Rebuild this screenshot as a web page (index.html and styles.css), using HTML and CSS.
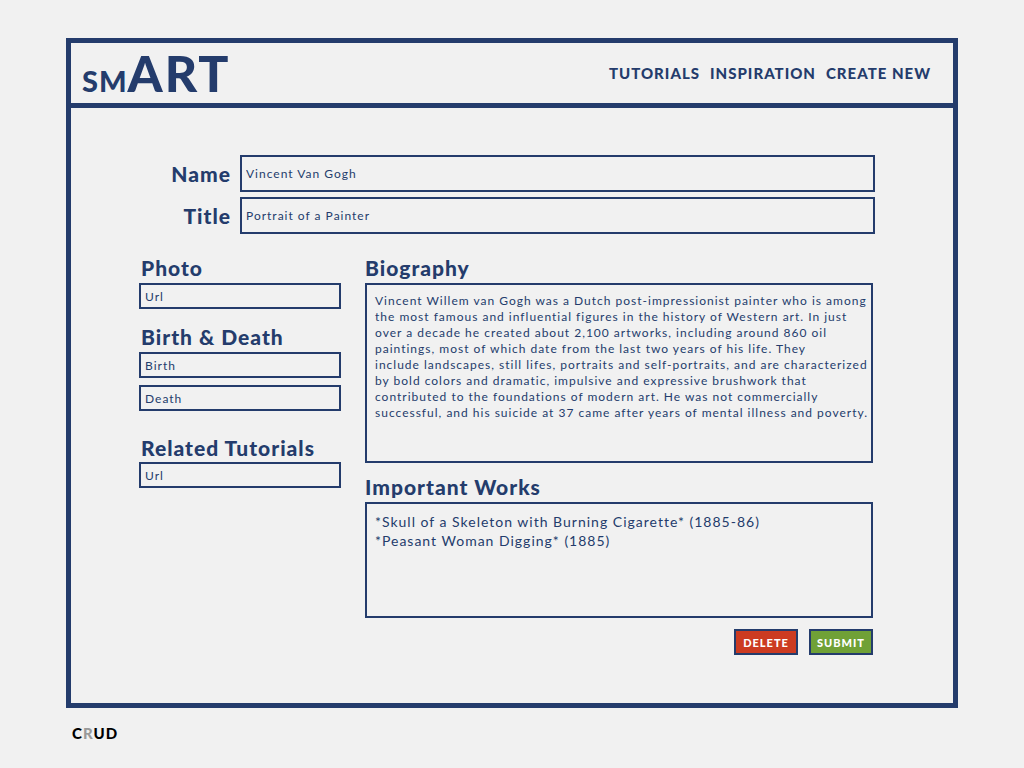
FILE: index.html
```html
<!DOCTYPE html>
<html lang="en">
<head>
<meta charset="utf-8">
<title>smART</title>
<link rel="stylesheet" href="styles.css">
</head>
<body>
<div class="frame">
  <header class="topbar">
    <a class="logo" href="#"><span class="logo-small">SM</span>ART</a>
    <nav class="nav">
      <a href="#">TUTORIALS</a>
      <a href="#">INSPIRATION</a>
      <a href="#">CREATE NEW</a>
    </nav>
  </header>
  <main class="main">
    <form class="form">
      <div class="row">
        <label class="label" for="name">Name</label>
        <input class="field field-large" id="name" type="text" value="Vincent Van Gogh">
      </div>
      <div class="row">
        <label class="label" for="title">Title</label>
        <input class="field field-large" id="title" type="text" value="Portrait of a Painter">
      </div>
      <div class="columns">
        <div class="side">
          <div class="group">
            <label class="label" for="photo">Photo</label>
            <input class="field" id="photo" type="text" value="Url">
          </div>
          <div class="group group-dates">
            <label class="label" for="birth">Birth &amp; Death</label>
            <input class="field" id="birth" type="text" value="Birth">
            <input class="field" id="death" type="text" value="Death" aria-label="Death">
          </div>
          <div class="group group-related">
            <label class="label" for="related">Related Tutorials</label>
            <input class="field" id="related" type="text" value="Url">
          </div>
        </div>
        <div class="content">
          <label class="label" for="bio">Biography</label>
          <textarea class="field area area-bio" id="bio">Vincent Willem van Gogh was a Dutch post-impressionist painter who is among
the most famous and influential figures in the history of Western art. In just
over a decade he created about 2,100 artworks, including around 860 oil
paintings, most of which date from the last two years of his life. They
include landscapes, still lifes, portraits and self-portraits, and are characterized
by bold colors and dramatic, impulsive and expressive brushwork that
contributed to the foundations of modern art. He was not commercially
successful, and his suicide at 37 came after years of mental illness and poverty.</textarea>
          <label class="label" for="works">Important Works</label>
          <textarea class="field area area-works" id="works">*Skull of a Skeleton with Burning Cigarette* (1885-86)
*Peasant Woman Digging* (1885)</textarea>
          <div class="actions">
            <button class="button button-delete" type="button">DELETE</button>
            <button class="button button-submit" type="submit">SUBMIT</button>
          </div>
        </div>
      </div>
    </form>
  </main>
</div>
<footer class="crud">C<span class="crud-muted">R</span>UD</footer>
</body>
</html>
```
FILE: styles.css
```css
* {
  box-sizing: border-box;
}

body {
  margin: 0;
  padding: 38px 66px 0;
  background: #f1f1f1;
  color: #243c6c;
  font-family: Lato, sans-serif;
}

.frame {
  border: 5px solid #243c6c;
}

.topbar {
  display: flex;
  align-items: center;
  justify-content: space-between;
  padding: 0 22px 0 11px;
  border-bottom: 5px solid #243c6c;
}

.logo {
  color: inherit;
  font-size: 50px;
  font-weight: 900;
  line-height: 60px;
  letter-spacing: 2px;
  text-decoration: none;
}

.logo-small {
  font-size: 29px;
  line-height: 1;
  letter-spacing: 1px;
}

.nav {
  display: flex;
  gap: 10px;
}

.nav a {
  color: inherit;
  font-size: 15px;
  font-weight: 900;
  line-height: 20px;
  letter-spacing: 1px;
  text-decoration: none;
}

.main {
  padding: 47px 78px 48px 68px;
}

.row {
  display: flex;
  align-items: center;
  gap: 9px;
  margin-bottom: 5px;
}

.row .label {
  width: 92px;
  padding: 0;
  text-align: right;
}

.label {
  display: block;
  padding: 0 0 1px 2px;
  font-size: 21px;
  font-weight: 900;
  line-height: 28px;
  letter-spacing: 1px;
}

.field {
  display: block;
  width: 100%;
  height: 26px;
  margin: 0;
  padding: 0 4px;
  border: 2px solid #243c6c;
  border-radius: 0;
  outline: 0;
  background: transparent;
  color: inherit;
  font-family: inherit;
  font-size: 12px;
  letter-spacing: 1px;
}

.field-large {
  flex: 1;
  height: 37px;
}

.columns {
  display: flex;
  gap: 24px;
  margin-top: 20px;
  padding-right: 2px;
}

.side {
  flex: 0 1 202px;
}

.group {
  margin-bottom: 14px;
}

.group .field + .field {
  margin-top: 7px;
}

.group-dates {
  margin-bottom: 23px;
}

.group-related .label {
  padding-bottom: 0;
}

.content {
  flex: 1;
}

.content .label {
  padding-left: 0;
}

.area {
  padding: 8px;
  line-height: 16px;
  resize: none;
  overflow: hidden;
  white-space: pre;
}

.area-bio {
  height: 180px;
  margin-bottom: 10px;
}

.area-works {
  height: 116px;
  font-size: 14px;
  line-height: 19px;
}

.actions {
  display: flex;
  justify-content: flex-end;
  gap: 11px;
  margin-top: 11px;
}

.button {
  width: 64px;
  height: 26px;
  padding: 0;
  border: 2px solid #243c6c;
  color: #fff;
  font-family: inherit;
  font-size: 11px;
  font-weight: 900;
  letter-spacing: 1px;
}

.button-delete {
  background: #cc3b21;
}

.button-submit {
  background: #70a136;
}

.crud {
  padding: 16px 6px;
  color: #000;
  font-size: 15px;
  font-weight: 900;
  line-height: 18px;
  letter-spacing: 1px;
}

.crud-muted {
  color: #999;
}
```
